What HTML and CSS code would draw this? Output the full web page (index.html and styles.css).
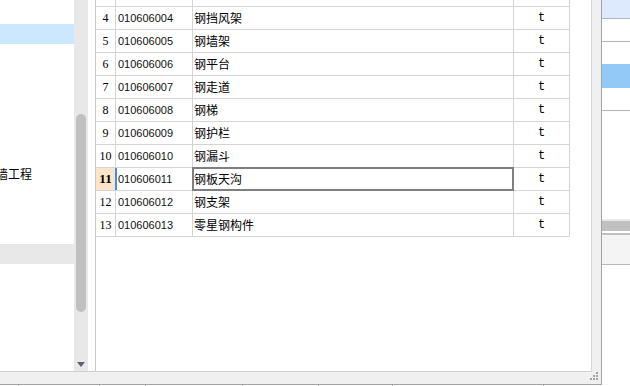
FILE: index.html
```html
<!DOCTYPE html>
<html lang="zh-CN">
<head>
<meta charset="utf-8">
<title>清单</title>
<link rel="stylesheet" href="styles.css">
</head>
<body>
<div class="screen">
  <div class="left-col">
    <div class="window">
      <div class="content">
        <div class="main">
          <div class="tree">
            <div class="tree-row"></div>
            <div class="tree-row selected"></div>
            <div class="tree-row"></div>
            <div class="tree-row"></div>
            <div class="tree-row"></div>
            <div class="tree-row"></div>
            <div class="tree-row"></div>
            <div class="tree-row"></div>
            <div class="tree-row"><span class="clip-text">墙工程</span></div>
            <div class="tree-row"></div>
            <div class="tree-row"></div>
            <div class="tree-row"></div>
            <div class="tree-row band"></div>
          </div>
          <div class="vscroll">
            <div class="thumb"></div>
            <div class="arrow"></div>
          </div>
          <div class="gap"></div>
          <div class="grid-area">
            <div class="grid">
              <div class="row partial"><div class="c num"></div><div class="c code"></div><div class="c name"></div><div class="c unit"></div></div>
              <div class="row"><div class="c num">4</div><div class="c code">010606004</div><div class="c name">钢挡风架</div><div class="c unit">t</div></div>
              <div class="row"><div class="c num">5</div><div class="c code">010606005</div><div class="c name">钢墙架</div><div class="c unit">t</div></div>
              <div class="row"><div class="c num">6</div><div class="c code">010606006</div><div class="c name">钢平台</div><div class="c unit">t</div></div>
              <div class="row"><div class="c num">7</div><div class="c code">010606007</div><div class="c name">钢走道</div><div class="c unit">t</div></div>
              <div class="row"><div class="c num">8</div><div class="c code">010606008</div><div class="c name">钢梯</div><div class="c unit">t</div></div>
              <div class="row"><div class="c num">9</div><div class="c code">010606009</div><div class="c name">钢护栏</div><div class="c unit">t</div></div>
              <div class="row"><div class="c num">10</div><div class="c code">010606010</div><div class="c name">钢漏斗</div><div class="c unit">t</div></div>
              <div class="row active"><div class="c num">11</div><div class="c code">010606011</div><div class="c name editing">钢板天沟</div><div class="c unit">t</div></div>
              <div class="row"><div class="c num">12</div><div class="c code">010606012</div><div class="c name">钢支架</div><div class="c unit">t</div></div>
              <div class="row"><div class="c num">13</div><div class="c code">010606013</div><div class="c name">零星钢构件</div><div class="c unit">t</div></div>
            </div>
          </div>
        </div>
        <div class="frame-side"></div>
      </div>
      <div class="statusbar">
        <svg class="grip" width="9" height="9" viewBox="0 0 9 9">
          <rect x="6" y="0" width="2" height="2" fill="#a3a3a3"/>
          <rect x="3" y="3" width="2" height="2" fill="#a3a3a3"/>
          <rect x="6" y="3" width="2" height="2" fill="#a3a3a3"/>
          <rect x="0" y="6" width="2" height="2" fill="#a3a3a3"/>
          <rect x="3" y="6" width="2" height="2" fill="#a3a3a3"/>
          <rect x="6" y="6" width="2" height="2" fill="#a3a3a3"/>
        </svg>
      </div>
    </div>
    <div class="ticks">
      <span class="t1"></span><span class="t2"></span><span class="t3"></span><span class="t4"></span><span class="t5"></span><span class="t6"></span><span class="t7"></span>
    </div>
  </div>
  <div class="side-panel">
    <div class="s-r1"></div>
    <div class="s-r2"></div>
    <div class="s-r3"></div>
    <div class="s-r4"></div>
    <div class="s-r5"></div>
    <div class="s-space"></div>
    <div class="s-b1"></div>
    <div class="s-b2"></div>
    <div class="s-b3"></div>
    <div class="s-b4"></div>
    <div class="s-b5"></div>
  </div>
</div>
</body>
</html>
```

FILE: styles.css
```css
* { box-sizing: border-box; }
html, body { margin: 0; padding: 0; }
body {
  width: 630px;
  height: 386px;
  overflow: hidden;
  background: #ffffff;
  font-family: "Liberation Sans", "Noto Sans CJK SC", sans-serif;
  color: #000;
}
.screen { display: flex; width: 630px; height: 386px; }
.left-col { width: 602px; display: flex; flex-direction: column; }
.window {
  width: 602px;
  height: 385px;
  background: #f0f0f0;
  border-right: 1px solid #a3a3a3;
  border-bottom: 1px solid #a3a3a3;
  display: flex;
  flex-direction: column;
}
.content { display: flex; height: 372px; }
.main {
  width: 592px;
  height: 372px;
  background: #fff;
  border-right: 1px solid #d6d6d6;
  border-bottom: 1px solid #d0d0d0;
  display: flex;
}
.frame-side { flex: 1; }

.tree {
  width: 74px;
  overflow: hidden;
  padding-top: 4px;
  background: #fff;
}
.tree-row {
  height: 20px;
  line-height: 20px;
  font-size: 12px;
  font-family: "Noto Sans CJK SC", sans-serif;
  white-space: nowrap;
}
.tree-row.selected { background: #cce8ff; }
.tree-row.band { background: #e8e8e8; }
.clip-text { display: block; margin-left: -4px; }

.vscroll {
  width: 14px;
  background: #e8e8e8;
  display: flex;
  flex-direction: column;
}
.thumb {
  margin: 114px 2px 0 2px;
  height: 198px;
  background: #c0c0c0;
  border-radius: 5px;
}
.arrow {
  margin-top: auto;
  margin-bottom: 4px;
  align-self: center;
  width: 0;
  height: 0;
  border-left: 4px solid transparent;
  border-right: 4px solid transparent;
  border-top: 5px solid #606070;
}
.gap { width: 7px; }

.grid-area {
  flex: 1;
  border-left: 1px solid #c8c8c8;
  overflow: hidden;
}
.grid { margin-top: -16px; }
.row {
  display: flex;
  width: 474px;
  height: 23px;
  border-bottom: 1px solid #d4d4d4;
}
.c {
  height: 22px;
  line-height: 22px;
  border-right: 1px solid #d4d4d4;
  white-space: nowrap;
  overflow: visible;
}
.num {
  width: 20px;
  text-align: center;
  font-family: "Liberation Serif", serif;
  font-size: 12px;
}
.code {
  width: 77px;
  padding-left: 2px;
  font-family: "Liberation Sans", sans-serif;
  font-size: 11px;
  color: #111;
}
.name {
  width: 321px;
  padding-left: 1px;
  font-family: "Noto Sans CJK SC", sans-serif;
  font-size: 12px;
}
.unit {
  width: 56px;
  text-align: center;
  font-family: "Liberation Mono", monospace;
  font-size: 12px;
}
.row.active .num {
  background: #fde4c7;
  font-weight: bold;
  font-size: 13px;
  border-right-color: #3c8ff0;
}
.row.active .code { box-shadow: inset 1px 0 0 #3c8ff0; }
.name.editing { position: relative; }
.name.editing::after {
  content: "";
  position: absolute;
  left: -1px;
  top: -1px;
  right: -1px;
  bottom: -1px;
  border: 2px solid #7f7f7f;
}

.statusbar {
  height: 12px;
  display: flex;
  justify-content: flex-end;
  padding-right: 2px;
}
.grip { display: block; }

.ticks { display: flex; height: 1px; background: #fff; }
.ticks span { height: 1px; border-right: 1px solid #a8a8a8; }
.t1 { width: 19px; }
.t2 { width: 81px; }
.t3 { width: 46px; }
.t4 { width: 97px; }
.t5 { width: 76px; }
.t6 { width: 74px; }
.t7 { width: 151px; }

.side-panel {
  width: 28px;
  display: flex;
  flex-direction: column;
  background: #fff;
}
.s-r1 { height: 19px; background: #dde9fc; border-bottom: 1px solid #b4b4b4; }
.s-r2 { height: 23px; border-bottom: 1px solid #b4b4b4; }
.s-r3 { height: 22px; }
.s-r4 { height: 24px; background: #92c9f7; }
.s-r5 { height: 23px; border-bottom: 1px solid #b4b4b4; }
.s-space { height: 108px; }
.s-b1 { height: 2px; background: #e8e8e8; }
.s-b2 { height: 10px; background: #c0c0c0; }
.s-b3 { height: 2px; background: #fff; }
.s-b4 { height: 2px; background: #c0c0c0; }
.s-b5 { height: 30px; background: #f4f4f4; border-bottom: 1px solid #b8b8b8; }
```
